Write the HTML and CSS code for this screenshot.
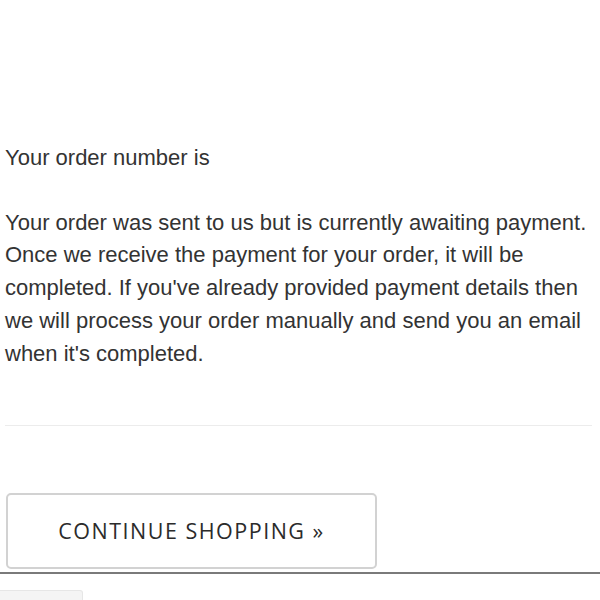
FILE: index.html
```html
<!DOCTYPE html>
<html>
<head>
<meta charset="utf-8">
<link rel="stylesheet" href="styles.css">
</head>
<body>
<div class="page">
  <div class="content">
    <p class="order-number">Your order number is</p>
    <p class="message">Your order was sent to us but is currently awaiting payment. Once we receive the payment for your order, it will be completed. If you've already provided payment details then we will process your order manually and send you an email when it's completed.</p>
    <hr class="divider">
    <a class="btn" href="#">CONTINUE SHOPPING »</a>
  </div>
  <div class="footer-bar"></div>
  <div class="footer-tab"></div>
</div>
</body>
</html>
```
FILE: styles.css
```css
html, body {
  margin: 0;
  padding: 0;
  background: #fff;
}
.page {
  width: 600px;
  height: 600px;
  overflow: hidden;
}
.content {
  padding: 142px 8px 0 5px;
  font-family: "Liberation Sans", Arial, sans-serif;
  font-size: 22px;
  line-height: 32.7px;
  color: #333;
}
.order-number {
  margin: 0 0 32px;
}
.message {
  margin: 0;
}
.divider {
  border: 0;
  border-top: 1px solid #ececec;
  margin: 55px 0 0;
}
.btn {
  display: flex;
  align-items: center;
  justify-content: center;
  box-sizing: border-box;
  width: 371px;
  height: 76px;
  margin-top: 67px;
  margin-left: 1px;
  border: 2px solid #d2d2d2;
  border-radius: 5px;
  font-family: "Open Sans", sans-serif;
  font-size: 21.5px;
  color: #2b2b2b;
  text-decoration: none;
  letter-spacing: 1.5px;
}
.footer-bar {
  margin-top: 3px;
  height: 2px;
  background: #7a7a7a;
}
.footer-tab {
  margin-top: 16px;
  width: 82px;
  height: 20px;
  background: #f4f4f4;
  border: 1px solid #e6e6e6;
  border-left: 0;
  border-radius: 0 3px 0 0;
}
```
